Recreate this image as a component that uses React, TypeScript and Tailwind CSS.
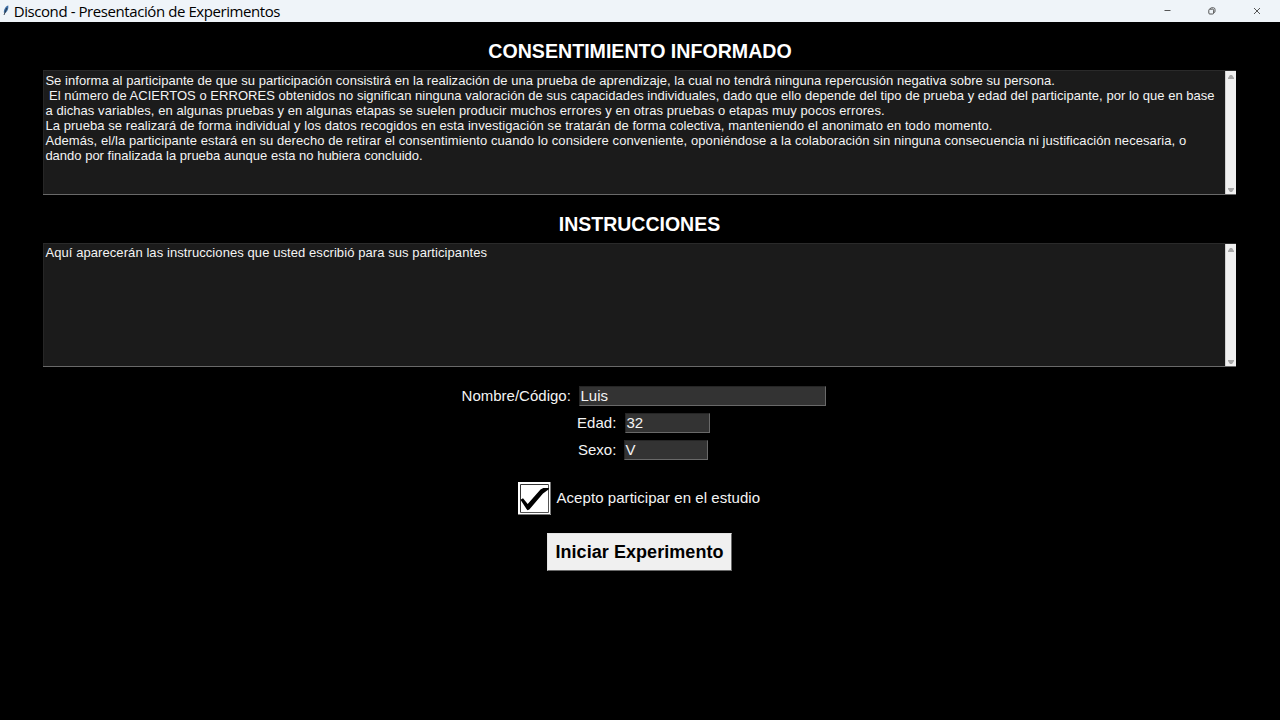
import React from "react";

const consent = [
  { text: "Se informa al participante de que su participación consistirá en la realización de una prueba de aprendizaje, la cual no tendrá ninguna repercusión negativa sobre su persona.", cls: "tracking-[0.041px]" },
  { text: " El número de ACIERTOS o ERRORES obtenidos no significan ninguna valoración de sus capacidades individuales, dado que ello depende del tipo de prueba y edad del participante, por lo que en base", cls: "tracking-[0.028px]" },
  { text: "a dichas variables, en algunas pruebas y en algunas etapas se suelen producir muchos errores y en otras pruebas o etapas muy pocos errores.", cls: "tracking-[0.075px]" },
  { text: "La prueba se realizará de forma individual y los datos recogidos en esta investigación se tratarán de forma colectiva, manteniendo el anonimato en todo momento.", cls: "tracking-[0.066px]" },
  { text: "Además, el/la participante estará en su derecho de retirar el consentimiento cuando lo considere conveniente, oponiéndose a la colaboración sin ninguna consecuencia ni justificación necesaria, o", cls: "tracking-[0.081px]" },
  { text: "dando por finalizada la prueba aunque esta no hubiera concluido.", cls: "tracking-[0px]" },
];

const instructions = [
  { text: "Aquí aparecerán las instrucciones que usted escribió para sus participantes", cls: "tracking-[0.079px]" },
];

function Scrollbar() {
  return (
    <div className="flex w-[11px] shrink-0 flex-col items-center justify-between border-l border-[#d0d0d0] bg-[#f0f0f0] pt-[4px] pb-[2px]">
      <svg width="6" height="4" viewBox="0 0 6 4"><path d="M2 0h2l2 3v1H0V3z" fill="#a8a8a8" /></svg>
      <svg width="6" height="4" viewBox="0 0 6 4"><path d="M2 4h2l2-3V0H0v1z" fill="#a8a8a8" /></svg>
    </div>
  );
}

function TextPanel({ lines, height, inset }: { lines: { text: string; cls: string }[]; height: string; inset: string }) {
  return (
    <div className={"ml-[43px] flex w-[1193px] border-t border-b border-t-[#2a2a2a] border-b-[#696969] " + height}>
      <div className={"min-w-0 flex-1 border-l border-[#262626] bg-[#1b1b1b] pl-[1.4px] text-[13px] leading-[15px] text-[#f4f4f4] " + inset}>
        {lines.map((line) => (
          <div key={line.text} className={"whitespace-pre " + line.cls}>{line.text}</div>
        ))}
      </div>
      <Scrollbar />
    </div>
  );
}

function Field({ value, cls }: { value: string; cls: string }) {
  return (
    <div className={"h-5 border border-t-[#252525] border-r-[#696969] border-b-[#696969] border-l-[#252525] bg-[#333333] pl-[0.5px] text-[15px] leading-[18px] " + cls}>
      {value}
    </div>
  );
}

export default function App() {
  return (
    <div className="flex h-[720px] w-[1280px] flex-col overflow-hidden bg-black font-['Liberation_Sans',Arial,sans-serif] text-[#f4f4f4]">
      <header className="flex h-[22px] shrink-0 items-center bg-[#eff4f9] text-black">
        <svg className="ml-[2px] shrink-0" width="8" height="14" viewBox="0 0 8 14">
          <path d="M6.300 1.500C3.800 2 1.800 5 1.800 8.500L3.400 9C5.500 7.500 6.800 4.500 6.300 1.500z" fill="#3c6ea5" />
          <path d="M4.800 4L2 11" stroke="#26323f" strokeWidth="0.9" />
        </svg>
        <span className="ml-[3.7px] font-['Open_Sans',sans-serif] text-[15px] leading-[23px] tracking-[-0.42px] whitespace-nowrap">Discond - Presentación de Experimentos</span>
        <div className="mr-[19px] ml-auto flex items-center text-[#444]">
          <svg width="7" height="8" viewBox="0 0 7 8"><path d="M0.500 3.500h6" stroke="currentColor" strokeWidth="0.900" /></svg>
          <svg className="ml-[37px]" width="8" height="8" viewBox="0 0 8 8" fill="none" stroke="currentColor" strokeWidth="0.9">
            <rect x="0.800" y="2.200" width="4.800" height="4.800" rx="1" />
            <path d="M2.300 2V1.600Q2.500 0.800 3.300 0.800H5.500Q7 0.900 7 2.400V4.400Q7 5.400 6 5.600" />
          </svg>
          <svg className="ml-[37px]" width="8" height="8" viewBox="0 0 8 8"><path d="M1 1l6 6M7 1L1 7" stroke="currentColor" strokeWidth="0.9" /></svg>
        </div>
      </header>

      <h1 className="mt-[17px] h-[24px] text-center text-[19.6px] leading-[24px] font-bold text-white">CONSENTIMIENTO INFORMADO</h1>
      <div className="mt-[7px]"><TextPanel lines={consent} height="h-[125px]" inset="pt-[2px]" /></div>
      <h2 className="mt-[17px] h-[24px] pr-px text-center text-[19.5px] leading-[24px] font-bold text-white">INSTRUCCIONES</h2>
      <div className="mt-[7px]"><TextPanel lines={instructions} height="h-[124px]" inset="pt-px" /></div>

      <div className="mt-[19px] flex flex-col gap-[7px] text-[15px] leading-[19px]">
        <div className="flex"><span className="ml-[461.600px] w-[117.400px] whitespace-nowrap">Nombre/Código:</span><Field value="Luis" cls="w-[247px]" /></div>
        <div className="flex"><span className="ml-[577px] w-[48px] tracking-[0.06px] whitespace-nowrap">Edad:</span><Field value="32" cls="w-[85px]" /></div>
        <div className="flex"><span className="ml-[578px] w-[46px] whitespace-nowrap">Sexo:</span><Field value="V" cls="w-[84px]" /></div>
      </div>

      <div className="mt-[22px] ml-[518px] flex h-[33px]">
        <svg width="33" height="33" viewBox="0 0 33 33">
          <rect width="33" height="33" fill="#fff" />
          <path d="M32.500 0V32.500H0" fill="none" stroke="#777" />
          <path d="M2.500 30.500V2.500H30.500" fill="none" stroke="#333" />
          <path d="M30.500 2.500V30.500H2.500" fill="none" stroke="#555" />
          <path d="M2.500 17.800L5 16.300L9.700 22L22.500 7.500L25.300 6H31L30.500 7.500L25 11.500L11.300 27.500L9.500 28.200L8.500 27z" fill="#000" />
        </svg>
        <span className="ml-[5.500px] text-[15px] leading-[31px] tracking-[0.06px] whitespace-nowrap">Acepto participar en el estudio</span>
      </div>

      <button className="mt-[18px] ml-[547px] h-[38px] w-[185px] border border-t-[#e3e3e3] border-r-[#696969] border-b-[#696969] border-l-[#e3e3e3] bg-[#f0f0f0] text-[18px] leading-[36px] font-bold tracking-[0.060px] whitespace-nowrap text-black">Iniciar Experimento</button>
    </div>
  );
}
